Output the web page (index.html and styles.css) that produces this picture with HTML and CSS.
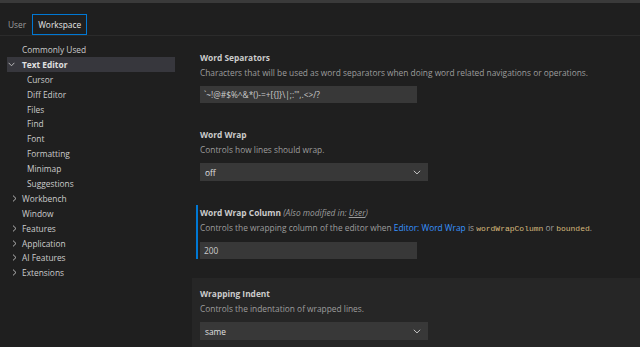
FILE: index.html
```html
<!DOCTYPE html>
<html>
<head>
<meta charset="utf-8">
<link rel="stylesheet" href="styles.css">
</head>
<body>
<div class="app">
  <div class="topline"></div>
  <div class="header">
    <div class="tabs">
      <div class="tab">User</div>
      <div class="tab active">Workspace</div>
    </div>
  </div>
  <div class="main">
    <nav class="toc">
      <div class="row"><span class="slot"></span>Commonly Used</div>
      <div class="row selected"><span class="slot down"><svg width="7" height="5" viewBox="0 0 7 5"><path d="M0.6 0.8 L3.5 3.8 L6.4 0.8" fill="none" stroke="#c5c5c5" stroke-width="0.9"/></svg></span><b>Text Editor</b></div>
      <div class="row sub">Cursor</div>
      <div class="row sub">Diff Editor</div>
      <div class="row sub">Files</div>
      <div class="row sub">Find</div>
      <div class="row sub">Font</div>
      <div class="row sub">Formatting</div>
      <div class="row sub">Minimap</div>
      <div class="row sub">Suggestions</div>
      <div class="row"><span class="slot right"><svg width="5" height="7" viewBox="0 0 5 7"><path d="M1 0.6 L4 3.5 L1 6.4" fill="none" stroke="#c5c5c5" stroke-width="0.9"/></svg></span>Workbench</div>
      <div class="row"><span class="slot"></span>Window</div>
      <div class="row"><span class="slot right"><svg width="5" height="7" viewBox="0 0 5 7"><path d="M1 0.6 L4 3.5 L1 6.4" fill="none" stroke="#c5c5c5" stroke-width="0.9"/></svg></span>Features</div>
      <div class="row"><span class="slot right"><svg width="5" height="7" viewBox="0 0 5 7"><path d="M1 0.6 L4 3.5 L1 6.4" fill="none" stroke="#c5c5c5" stroke-width="0.9"/></svg></span>Application</div>
      <div class="row"><span class="slot right"><svg width="5" height="7" viewBox="0 0 5 7"><path d="M1 0.6 L4 3.5 L1 6.4" fill="none" stroke="#c5c5c5" stroke-width="0.9"/></svg></span>AI Features</div>
      <div class="row"><span class="slot right"><svg width="5" height="7" viewBox="0 0 5 7"><path d="M1 0.6 L4 3.5 L1 6.4" fill="none" stroke="#c5c5c5" stroke-width="0.9"/></svg></span>Extensions</div>
    </nav>
    <section class="settings">
      <div class="item">
        <div class="body">
          <div class="title">Word Separators</div>
          <div class="desc">Characters that will be used as word separators when doing word related navigations or operations.</div>
          <div class="input">`~!@#$%^&amp;*()-=+[{]}\|;:'",.&lt;&gt;/?</div>
        </div>
      </div>
      <div class="item">
        <div class="body">
          <div class="title">Word Wrap</div>
          <div class="desc">Controls how lines should wrap.</div>
          <div class="select"><span>off</span><svg width="8" height="5" viewBox="0 0 8 5"><path d="M0.8 0.8 L4 3.9 L7.2 0.8" fill="none" stroke="#c5c5c5" stroke-width="1"/></svg></div>
        </div>
      </div>
      <div class="item item-modified">
        <div class="body modified">
          <div class="title">Word Wrap Column <i class="also">(Also modified in: <u>User</u>)</i></div>
          <div class="desc">Controls the wrapping column of the editor when <span class="link">Editor: Word Wrap</span> is <code>wordWrapColumn</code> or <code>bounded</code>.</div>
          <div class="input">200</div>
        </div>
      </div>
      <div class="item focused">
        <div class="body">
          <div class="title">Wrapping Indent</div>
          <div class="desc">Controls the indentation of wrapped lines.</div>
          <div class="select"><span>same</span><svg width="8" height="5" viewBox="0 0 8 5"><path d="M0.8 0.8 L4 3.9 L7.2 0.8" fill="none" stroke="#c5c5c5" stroke-width="1"/></svg></div>
        </div>
      </div>
    </section>
  </div>
</div>
</body>
</html>
```
FILE: styles.css
```css
html, body {
  margin: 0;
  padding: 0;
  background: #1f1f1f;
}
body {
  font-family: "Open Sans", "Noto Sans", sans-serif;
  font-size: 8.35px;
  color: #cccccc;
  width: 640px;
  height: 347px;
  overflow: hidden;
}
.app {
  display: flex;
  flex-direction: column;
  height: 347px;
}
.topline {
  height: 3px;
  flex-shrink: 0;
  background: #3a3a3a;
}
.header {
  flex-shrink: 0;
  padding-top: 11px;
  border-bottom: 1px solid #2b2b2b;
}
.tabs {
  display: flex;
  align-items: stretch;
  height: 21px;
  padding-left: 3px;
  gap: 1px;
}
.tab {
  display: flex;
  align-items: center;
  padding: 0 4px;
  color: #9d9d9d;
  border: 1px solid transparent;
}
.tab.active {
  color: #e6e6e6;
  border-color: #0078d4;
  padding: 0 5px;
}
.main {
  display: flex;
  flex: 1;
  min-height: 0;
  overflow: hidden;
}
.toc {
  width: 168px;
  flex-shrink: 0;
  padding: 6px 17px 0 7px;
  display: flex;
  flex-direction: column;
}
.row {
  height: 14.9px;
  flex-shrink: 0;
  display: flex;
  align-items: center;
  white-space: nowrap;
}
.row.sub {
  padding-left: 20px;
}
.row.selected {
  background: #37373d;
}
.row b {
  font-weight: 700;
  color: #e0e0e0;
}
.slot {
  width: 15px;
  flex-shrink: 0;
  display: flex;
  align-items: center;
}
.slot.down {
  padding-left: 1px;
  width: 14px;
}
.slot.right {
  padding-left: 5px;
  width: 10px;
}
.settings {
  flex: 1;
  padding-top: 6px;
  display: flex;
  flex-direction: column;
}
.item {
  flex-shrink: 0;
  padding: 8px 0 16px 4px;
}
.item.item-modified {
  padding-bottom: 19px;
}
.item.focused {
  background: #262626;
  padding-top: 8px;
}
.body {
  border-left: 2px solid transparent;
  padding-left: 2px;
}
.body.modified {
  border-left-color: #0078d4;
}
.title {
  font-weight: 700;
  line-height: 15px;
  height: 15px;
  color: #cccccc;
  white-space: nowrap;
}
.also {
  font-weight: 400;
  color: #9d9d9d;
}
.desc {
  line-height: 15px;
  color: #9d9d9d;
  white-space: nowrap;
}
.link {
  color: #3794ff;
}
code {
  font-family: "Liberation Mono", monospace;
  font-size: 8px;
  color: #d7ba7d;
}
.input {
  margin-top: 6px;
  width: 213px;
  height: 17px;
  background: #383838;
  display: flex;
  align-items: center;
  padding-left: 4px;
  color: #cccccc;
  white-space: nowrap;
}
.select {
  margin-top: 6px;
  width: 216px;
  height: 18px;
  background: #383838;
  display: flex;
  align-items: center;
  justify-content: space-between;
  padding: 0 7px 0 5px;
  color: #e0e0e0;
}
```
